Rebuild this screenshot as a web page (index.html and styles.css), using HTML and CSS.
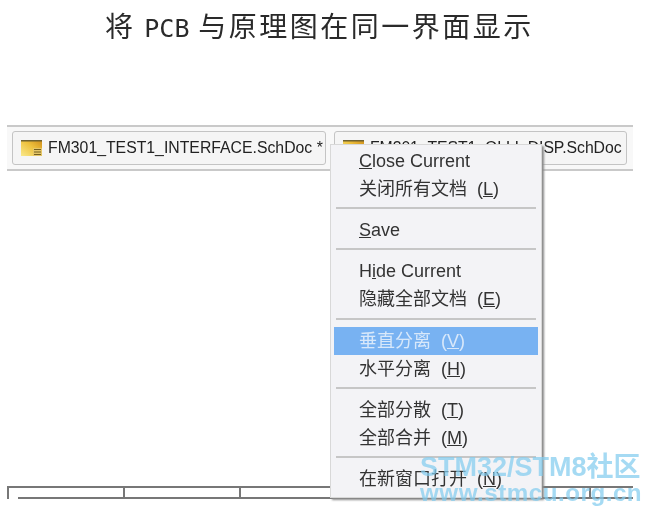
FILE: index.html
```html
<!DOCTYPE html>
<html lang="zh-CN">
<head>
<meta charset="utf-8">
<title>将 PCB 与原理图在同一界面显示</title>
<link rel="stylesheet" href="styles.css">
</head>
<body>
<div class="page">
  <h1 class="title">将 <span class="latin">PCB</span> 与原理图在同一界面显示</h1>
  <div class="tabbar">
    <div class="tab tab-first">
      <svg class="doc-icon" width="21" height="16" viewBox="0 0 21 16"><defs><linearGradient id="g" x1="0" y1="1" x2="1" y2="0"><stop offset="0" stop-color="#f9e98c"/><stop offset=".55" stop-color="#eec23e"/><stop offset="1" stop-color="#cf8d1a"/></linearGradient></defs><rect width="21" height="16" fill="url(#g)"/><rect width="21" height="1.500" fill="#6f6230"/><rect x="12" y="8" width="9" height="8" fill="#e6c768"/><path d="M13 9.500h7M13 12h7M13 14.500h7" stroke="#75601f" stroke-width="1"/></svg>
      <span>FM301_TEST1_INTERFACE.SchDoc *</span>
    </div>
    <div class="tab tab-second">
      <svg class="doc-icon" width="21" height="16" viewBox="0 0 21 16"><rect width="21" height="16" fill="url(#g)"/><rect width="21" height="1.500" fill="#6f6230"/></svg>
      <span class="tight">FM301_TEST1_OLLL.DISP.SchDoc</span>
    </div>
  </div>
  <div class="ruler">
    <div class="cell"></div>
    <div class="cell"></div>
    <div class="cell cell-wide"></div>
    <div class="cell cell-end"></div>
  </div>

  <div class="menu">
    <div class="item"><u>C</u>lose Current</div>
    <div class="item">关闭所有文档<span class="key">(<u>L</u>)</span></div>
    <div class="sep"></div>
    <div class="item"><u>S</u>ave</div>
    <div class="sep"></div>
    <div class="item">H<u>i</u>de Current</div>
    <div class="item">隐藏全部文档<span class="key">(<u>E</u>)</span></div>
    <div class="sep sep-tall"></div>
    <div class="item item-active">垂直分离<span class="key">(<u>V</u>)</span></div>
    <div class="item">水平分离<span class="key">(<u>H</u>)</span></div>
    <div class="sep"></div>
    <div class="item">全部分散<span class="key">(<u>T</u>)</span></div>
    <div class="item">全部合并<span class="key">(<u>M</u>)</span></div>
    <div class="sep"></div>
    <div class="item">在新窗口打开<span class="key">(<u>N</u>)</span></div>
  </div>

  <div class="watermark">
    <div class="wm-top">STM32/STM8社区</div>
    <div class="wm-bottom">www.stmcu.org.cn</div>
  </div>
</div>
</body>
</html>
```

FILE: styles.css
```css
* { box-sizing: border-box; }
html, body { margin: 0; padding: 0; background: #fff; }
.page {
  position: relative;
  width: 650px;
  height: 512px;
  overflow: hidden;
  padding-top: 5px;
  filter: blur(0.35px);
  font-family: "Liberation Sans", "Noto Sans CJK SC", sans-serif;
  color: #222;
}
.title {
  margin: 0 0 0 105px;
  height: 40px;
  line-height: 40px;
  font-family: "Noto Sans CJK SC", sans-serif;
  font-size: 28px;
  font-weight: 400;
  letter-spacing: 2.5px;
  white-space: nowrap;
  color: #2a2a2a;
}
.latin {
  font-family: "DejaVu Sans Mono", monospace;
  font-size: 25px;
  letter-spacing: 0;
}
.tabbar {
  display: flex;
  gap: 8px;
  width: 626px;
  height: 46px;
  margin: 80px 0 0 7px;
  padding: 4px 5px 0;
  background: #f8f8f8;
  border-top: 2px solid #c9c9c9;
  border-bottom: 2px solid #c9c9c9;
}
.tab {
  display: flex;
  align-items: center;
  height: 34px;
  padding-left: 8px;
  gap: 6px;
  font-size: 15.8px;
  white-space: nowrap;
  background: #f5f5f5;
  border: 1px solid #c4c4c4;
  border-radius: 3px;
}
.tab-first { width: 314px; }
.tab-second { width: 293px; }
.tight { letter-spacing: -0.07px; }
.doc-icon { flex: none; }
.ruler {
  display: flex;
  width: 626px;
  height: 13px;
  margin: 315px 0 0 7px;
  border-top: 2px solid #777;
  position: relative;
}
.ruler::after {
  content: "";
  position: absolute;
  left: 11px;
  right: 0;
  bottom: 0;
  height: 2px;
  background: #777;
}
.cell {
  width: 116px;
  height: 11px;
  border-left: 2px solid #777;
}
.cell-wide { width: 350px; }
.cell-end { width: 44px; }
.menu {
  position: absolute;
  left: 330px;
  top: 144px;
  width: 212px;
  height: 354px;
  padding: 2px 3px;
  background: #f3f3f6;
  border: 1px solid #d8d8d8;
  box-shadow: 2px 2px 2px #8a8a8a;
  font-size: 18px;
  color: #333;
}
.item {
  height: 28px;
  line-height: 28px;
  padding-left: 25px;
  white-space: nowrap;
}
.key { margin-left: 10px; }
.item-active {
  background: #78b2f2;
  color: #d8e8fa;
}
.sep {
  height: 13px;
  padding-top: 4px;
}
.sep-tall { height: 14px; padding-top: 5px; }
.sep::before {
  content: "";
  display: block;
  height: 2px;
  margin: 0 2px;
  background: #c6c6c6;
}
.watermark {
  position: absolute;
  left: 420px;
  top: 452px;
  color: rgba(130, 204, 238, 0.72);
  font-weight: 700;
  white-space: nowrap;
}
.wm-top { font-size: 27px; line-height: 31px; }
.wm-bottom { font-size: 24.2px; line-height: 20px; letter-spacing: 0.5px; }
```
